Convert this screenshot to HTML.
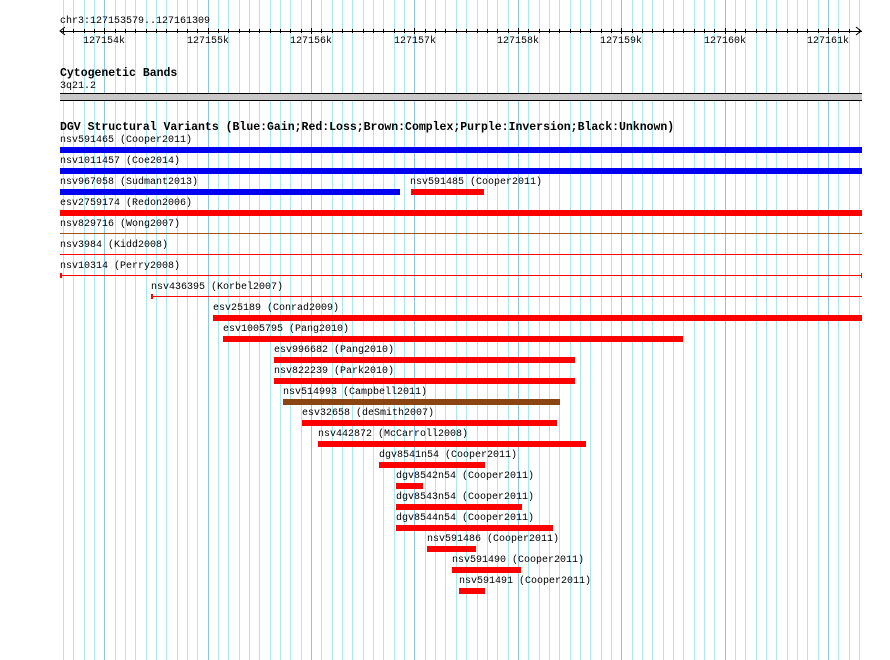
<!DOCTYPE html>
<html><head><meta charset="utf-8"><style>
body{margin:0;background:#fff;width:890px;height:660px;overflow:hidden;position:relative;font-family:"Liberation Mono","DejaVu Sans Mono",monospace;}
.g{position:absolute;top:0;height:660px;width:1px;}
.t{position:absolute;font-size:10px;line-height:11px;white-space:pre;color:#000;}
.b{position:absolute;font-size:11.5px;line-height:12px;font-weight:bold;white-space:pre;}
.r{position:absolute;}
</style></head><body>
<div id="grid"></div>
<div class="t" style="left:60px;top:16px">chr3:127153579..127161309</div>
<div class="r" style="left:61px;top:31px;width:801px;height:1px;background:#000"></div>
<svg class="r" style="left:0;top:0" width="890" height="60" id="ru">
<polyline points="65,27 60,31 65,35" fill="none" stroke="#000"/>
<polyline points="856,27 861,31 856,35" fill="none" stroke="#000"/>
</svg>
<div id="lab"></div>
<div class="b" style="left:60px;top:68px">Cytogenetic Bands</div>
<div class="t" style="left:60px;top:81px">3q21.2</div>
<div class="r" style="left:60px;top:93px;width:802px;height:6px;background:#c8c8c8;border-top:1px solid #000;border-bottom:1px solid #000"></div>
<div class="b" style="left:60px;top:122px">DGV Structural Variants (Blue:Gain;Red:Loss;Brown:Complex;Purple:Inversion;Black:Unknown)</div>
<div id="tr"></div>
<script>
var g=document.getElementById('grid'),h='';
for(var k=0;k<78;k++){var x=Math.round(62.9+10.34*k);if(x>860)break;var maj=(k-4)%10==0;
h+='<div class="g" style="left:'+x+'px;background:'+(maj?'#8cc4f0':'#a8e8f0')+'"></div>';}
g.innerHTML=h;
var s='';for(var k=0;k<78;k++){var x=Math.round(62.9+10.34*k)+0.5;if(x>860)break;var maj=(k-4)%10==0;
s+='<line x1="'+x+'" x2="'+x+'" y1="'+(maj?28:29)+'" y2="'+(maj?34:33)+'" stroke="#000"/>';}
document.getElementById('ru').innerHTML+=s;
var L='';for(var i=0;i<8;i++){var x=104.3+103.4*i;L+='<div class="t" style="left:'+Math.round(x-21)+'px;top:36px">'+(127154+i)+'k</div>';}
document.getElementById('lab').innerHTML=L;
var R=[
[0,'nsv591465 (Cooper2011)',60,60,862,'#0000f0','t'],
[1,'nsv1011457 (Coe2014)',60,60,862,'#0000f0','t'],
[2,'nsv967058 (Sudmant2013)',60,60,400,'#0000f0','t'],
[2,'nsv591485 (Cooper2011)',410,411,484,'#f00','t'],
[3,'esv2759174 (Redon2006)',60,60,862,'#f00','t'],
[4,'nsv829716 (Wong2007)',60,60,862,'#a05010','l'],
[5,'nsv3984 (Kidd2008)',60,60,862,'#f00','l'],
[6,'nsv10314 (Perry2008)',60,60,862,'#f00','e'],
[7,'nsv436395 (Korbel2007)',151,151,862,'#f00','e1'],
[8,'esv25189 (Conrad2009)',213,213,862,'#f00','t'],
[9,'esv1005795 (Pang2010)',223,223,683,'#f00','t'],
[10,'esv996682 (Pang2010)',274,274,575,'#f00','t'],
[11,'nsv822239 (Park2010)',274,274,575,'#f00','t'],
[12,'nsv514993 (Campbell2011)',283,283,560,'#8b4513','t'],
[13,'esv32658 (deSmith2007)',302,302,557,'#f00','t'],
[14,'nsv442872 (McCarroll2008)',318,318,586,'#f00','t'],
[15,'dgv8541n54 (Cooper2011)',379,379,485,'#f00','t'],
[16,'dgv8542n54 (Cooper2011)',396,396,423,'#f00','t'],
[17,'dgv8543n54 (Cooper2011)',396,396,522,'#f00','t'],
[18,'dgv8544n54 (Cooper2011)',396,396,553,'#f00','t'],
[19,'nsv591486 (Cooper2011)',427,427,476,'#f00','t'],
[20,'nsv591490 (Cooper2011)',452,452,521,'#f00','t'],
[21,'nsv591491 (Cooper2011)',459,459,485,'#f00','t']];
var T='';R.forEach(function(r){var y=147+21*r[0];
T+='<div class="t" style="left:'+r[2]+'px;top:'+(y-12)+'px">'+r[1]+'</div>';
if(r[6]=='t')T+='<div class="r" style="left:'+r[3]+'px;top:'+y+'px;width:'+(r[4]-r[3])+'px;height:6px;background:'+r[5]+'"></div>';
else{T+='<div class="r" style="left:'+r[3]+'px;top:'+(y+2)+'px;width:'+(r[4]-r[3])+'px;height:1px;background:'+r[5]+'"></div>';
if(r[6]!='l'){T+='<div class="r" style="left:'+r[3]+'px;top:'+y+'px;width:2px;height:5px;background:'+r[5]+'"></div>';
if(r[6]=='e')T+='<div class="r" style="left:'+(r[4]-1)+'px;top:'+y+'px;width:1px;height:5px;background:'+r[5]+'"></div>';}}
});
document.getElementById('tr').innerHTML=T;
</script>
</body></html>
